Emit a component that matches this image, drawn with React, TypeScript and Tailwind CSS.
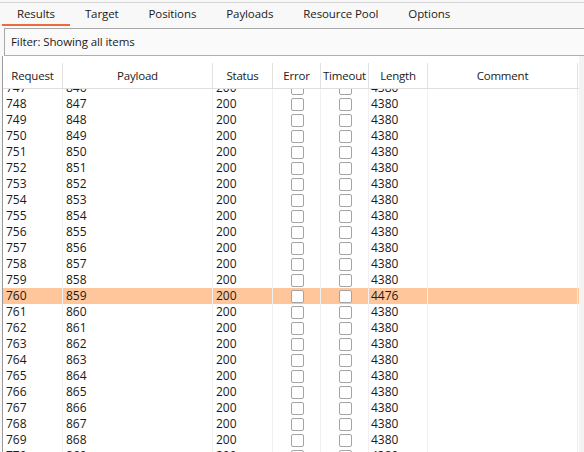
import React from 'react';

const TABS = ['Results', 'Target', 'Positions', 'Payloads', 'Resource Pool', 'Options'];

const COLS = [
  { name: 'Request', w: 'w-[60px]' },
  { name: 'Payload', w: 'w-[150px]' },
  { name: 'Status', w: 'w-[60px]' },
  { name: 'Error', w: 'w-[48px]' },
  { name: 'Timeout', w: 'w-[48px]' },
  { name: 'Length', w: 'w-[59px]' },
  { name: 'Comment', w: 'w-[150px]' },
];

const ROWS = Array.from({ length: 24 }, (_, i) => {
  const req = 747 + i;
  return { req, payload: req + 99, status: 200, length: req === 760 ? 4476 : 4380 };
});

function Box() {
  return <div className="w-[13px] h-[13px] rounded-[2px] border border-[#a3a3a3] bg-white" />;
}

export default function App() {
  return (
    <div
      className="w-[584px] h-[452px] overflow-hidden bg-[#f8f8f8] text-[12px] text-[#1a1a1a] flex flex-col"
      style={{ fontFamily: '"Open Sans", "Noto Sans", sans-serif' }}
    >
      {/* Tabs */}
      <div className="mt-[2px] h-[24px] border-t border-[#d4d4d4] flex pl-[2px] shrink-0 text-[11.5px] tracking-[-0.1px]">
        {TABS.map((t, i) => (
          <div
            key={t}
            className={`px-[15px] flex items-center border-b-2 ${i === 0 ? 'border-[#ee6a3c]' : 'border-transparent'}`}
          >
            {t}
          </div>
        ))}
      </div>

      {/* Filter */}
      <div className="mt-[2px] ml-[4px] -mr-[4px] h-[28px] border border-[#a8a8a8] border-b-[#9fb4c6] bg-[#fafafa] flex items-center pl-[6px] shrink-0 text-[11.5px] tracking-[-0.1px]">
        Filter: Showing all items
      </div>

      {/* Table */}
      <div className="flex-1 min-h-0 ml-[2px] border-l border-[#9a9a9a] bg-white flex">
        <div className="flex-1 flex flex-col pt-[7px] min-w-0">
          <div className="h-[26px] flex border-b border-[#dedede] shrink-0 text-[11.5px] tracking-[-0.2px]">
            {COLS.map((c) => (
              <div
                key={c.name}
                className={`${c.w} shrink-0 border-r border-[#e2e2e2] flex items-center justify-center`}
              >
                {c.name}
              </div>
            ))}
          </div>
          <div className="flex-1 min-h-0 overflow-hidden">
            <div className="-mt-[9px]">
              {ROWS.map((r) => (
                <div key={r.req} className={`h-[16px] flex ${r.req === 760 ? 'bg-[#ffc69c]' : ''}`}>
                  <div className="w-[60px] shrink-0 border-r border-[#f0f0f0] pl-[3px] leading-[16px]">{r.req}</div>
                  <div className="w-[150px] shrink-0 border-r border-[#f0f0f0] pl-[3px] leading-[16px]">{r.payload}</div>
                  <div className="w-[60px] shrink-0 border-r border-[#f0f0f0] pl-[3px] leading-[16px]">{r.status}</div>
                  <div className="w-[48px] shrink-0 border-r border-[#f0f0f0] flex items-center justify-center pl-[2px]">
                    <Box />
                  </div>
                  <div className="w-[48px] shrink-0 border-r border-[#f0f0f0] flex items-center justify-center pl-[2px]">
                    <Box />
                  </div>
                  <div className="w-[59px] shrink-0 border-r border-[#f0f0f0] pl-[2px] leading-[16px]">{r.length}</div>
                  <div className="w-[150px] shrink-0 border-r border-[#ececec]" />
                </div>
              ))}
            </div>
          </div>
        </div>
        <div className="w-[5px] shrink-0 bg-[#f3f3f3]" />
      </div>
    </div>
  );
}
